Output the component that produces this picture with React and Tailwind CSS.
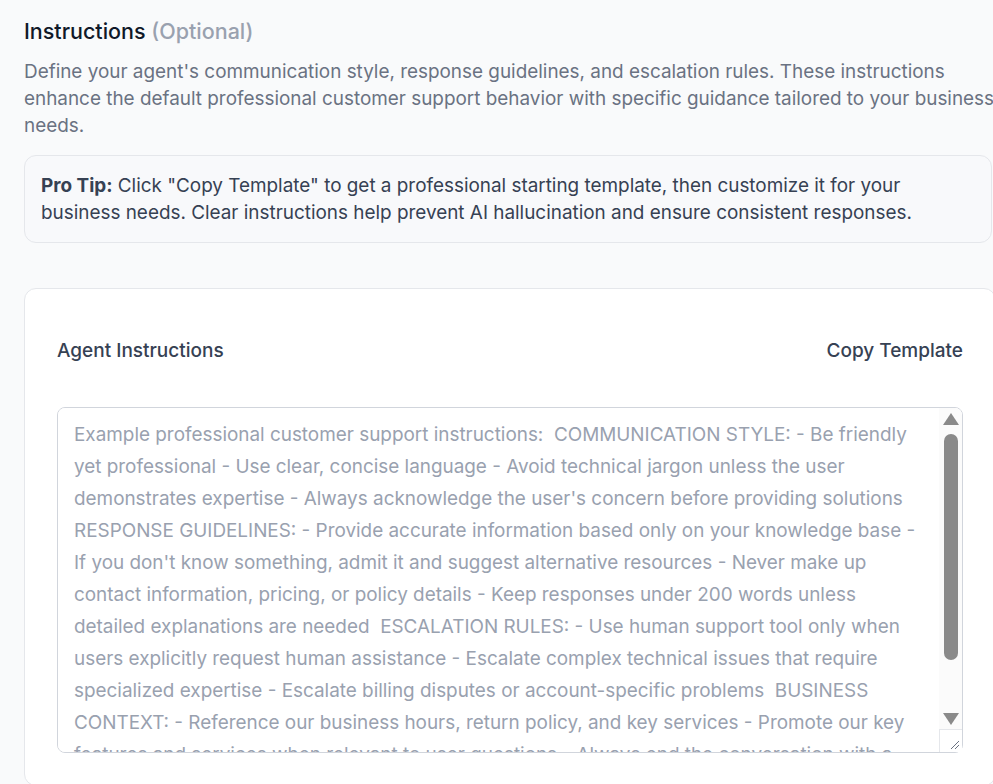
import { useState } from "react"

const TEMPLATE =
  "Example professional customer support instructions:  COMMUNICATION STYLE: - Be friendly yet professional - Use clear, concise language - Avoid technical jargon unless the user demonstrates expertise - Always acknowledge the user's concern before providing solutions  RESPONSE GUIDELINES: - Provide accurate information based only on your knowledge base - If you don't know something, admit it and suggest alternative resources - Never make up contact information, pricing, or policy details - Keep responses under 200 words unless detailed explanations are needed  ESCALATION RULES: - Use human support tool only when users explicitly request human assistance - Escalate complex technical issues that require specialized expertise - Escalate billing disputes or account-specific problems  BUSINESS CONTEXT: - Reference our business hours, return policy, and key services - Promote our key features and services when relevant to user questions - Always end the conversation with a positive note and offer further help"

// fake classic scrollbar drawn over the textarea
function Scrollbar() {
  return (
    <div className="pointer-events-none absolute top-px right-px bottom-px flex w-[23px] flex-col items-center rounded-r-lg bg-[#fbfbfb]">
      <div className="mt-[5px] h-0 w-0 border-x-[8px] border-b-[12px] border-x-transparent border-b-[#8a8a8a]" />
      <div className="mt-[9px] h-[226px] w-[14px] rounded-full bg-[#8a8a8a]" />
      <div className="mt-[53px] h-0 w-0 border-x-[8px] border-t-[12px] border-x-transparent border-t-[#8a8a8a]" />
      <div className="mt-[4px] flex h-[23px] w-[23px] items-end justify-end border-t border-l border-gray-200 bg-white pr-[2px] pb-[2px]">
        <svg width="10" height="10" viewBox="0 0 10 10" className="text-gray-500">
          <path d="M9 1L1 9M9 5L5 9" stroke="currentColor" strokeWidth="1" />
        </svg>
      </div>
    </div>
  )
}

export default function App() {
  const [text, setText] = useState(TEMPLATE)

  return (
    <div
      className="min-h-screen w-full overflow-hidden bg-[#f9fafb] pl-6 pt-[17px] pb-10"
      style={{ fontFamily: "Inter, 'Noto Sans', sans-serif" }}
    >
      {/* Header */}
      <h2 className="text-[21.5px] leading-7 font-medium text-gray-900">
        Instructions <span className="text-gray-400">(Optional)</span>
      </h2>
      <p className="mt-[13px] w-[985px] text-[18.9px] leading-[27px] text-gray-500">
        Define your agent's communication style, response guidelines, and escalation rules. These instructions
        enhance the default professional customer support behavior with specific guidance tailored to your business
        needs.
      </p>

      {/* Pro tip */}
      <div className="mt-4 w-[968px] rounded-xl border border-gray-200 bg-[#f8f9fb] px-4 py-4">
        <p className="text-[18.9px] leading-[27px] text-gray-700">
          <span className="font-bold">Pro Tip:</span> Click "Copy Template" to get a professional starting template,
          then customize it for your business needs. Clear instructions help prevent AI hallucination and ensure
          consistent responses.
        </p>
      </div>

      {/* Card */}
      <div className="mt-[45px] w-[972px] rounded-xl border border-gray-200 bg-white px-8 pt-8 pb-8">
        <div className="flex items-center justify-between py-4">
          <label className="text-[19px] leading-[27px] font-medium text-gray-700">Agent Instructions</label>
          <button type="button" className="text-[19px] leading-[27px] font-medium text-gray-700">
            Copy Template
          </button>
        </div>
        <div className="relative mt-[27px] h-[346px] w-full">
          <textarea
            value={text}
            onChange={(e) => setText(e.target.value)}
            className="block h-full w-full resize-none rounded-lg border border-gray-300 bg-white pt-[11px] pr-[32px] pl-4 text-[18.9px] leading-8 text-gray-400 outline-none [scrollbar-width:none]"
          />
          <Scrollbar />
        </div>
      </div>
    </div>
  )
}
